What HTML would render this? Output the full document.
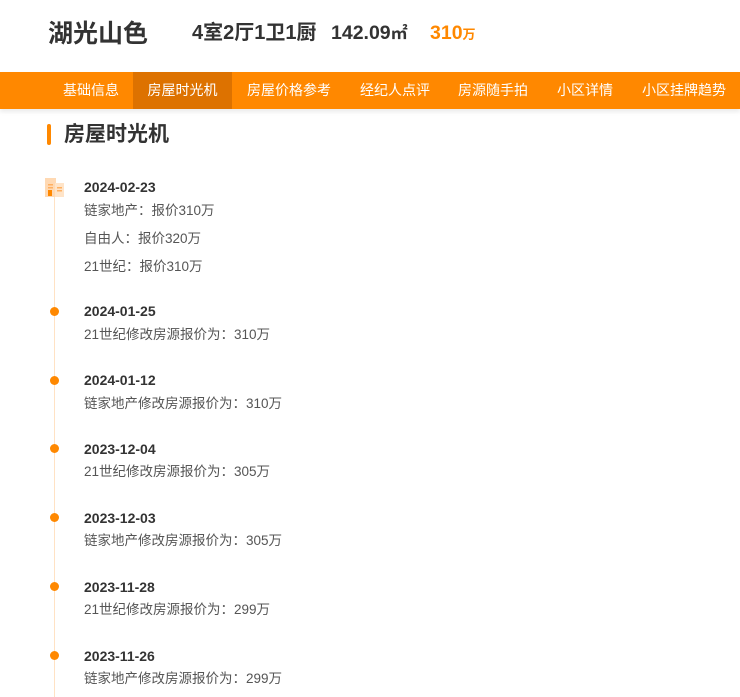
<!DOCTYPE html>
<html><head><meta charset="utf-8"><style>
*{margin:0;padding:0;box-sizing:border-box}
body{width:740px;height:697px;overflow:hidden;background:#fff;font-family:"Liberation Sans","Noto Sans CJK SC",sans-serif;color:#333;position:relative}
.a{position:absolute;white-space:nowrap}
.nav{position:absolute;left:0;top:72px;width:740px;height:37px;background:#ff8800;box-shadow:0 3px 4px rgba(0,0,0,.08)}
.nav span{position:absolute;top:0;height:37px;line-height:37px;font-size:14px;color:#fff}
.date{font-weight:bold;font-size:14px;color:#333}
.t{font-size:13.5px;color:#555}
.dot{position:absolute;left:50px;width:9px;height:9px;border-radius:50%;background:#ff8800}
</style></head><body>
<div class="a" style="left:48px;top:16px;font-size:25px;font-weight:bold;color:#333;line-height:36px">湖光山色</div>
<div class="a" style="left:192px;top:19px;font-size:20px;font-weight:bold;color:#333;line-height:28px">4室2厅1卫1厨</div>
<div class="a" style="left:331px;top:19px;font-size:19.5px;font-weight:bold;color:#333;line-height:28px">142.09<span style="font-size:17px">㎡</span></div>
<div class="a" style="left:430px;top:19px;font-size:19.5px;font-weight:bold;color:#ff8800;line-height:28px">310<span style="font-size:13px">万</span></div>
<div class="nav">
<span style="left:63px">基础信息</span>
<span style="left:133px;width:99px;background:#dd7200;text-align:center">房屋时光机</span>
<span style="left:247px">房屋价格参考</span>
<span style="left:360px">经纪人点评</span>
<span style="left:458px">房源随手拍</span>
<span style="left:557px">小区详情</span>
<span style="left:642px">小区挂牌趋势</span>
</div>
<div class="a" style="left:47px;top:124px;width:4px;height:21px;background:#ff8800;border-radius:2px"></div>
<div class="a" style="left:64px;top:120px;font-size:21px;font-weight:bold;color:#333;line-height:30px">房屋时光机</div>
<div class="a" style="left:54px;top:186px;width:1px;height:511px;background:#ffe2c4"></div>
<svg class="a" style="left:45px;top:178px" width="20" height="20"><rect x="0" y="0" width="11" height="19" fill="#ffd9b3"/><rect x="10" y="5" width="9" height="14" fill="#ffe4c8"/><rect x="3" y="12" width="4" height="6" fill="#ff8800"/><rect x="3" y="6" width="5" height="1.5" fill="#ffb060"/><rect x="3" y="9" width="5" height="1.5" fill="#ffb060"/><rect x="12" y="9" width="5" height="1.5" fill="#ffb060"/><rect x="12" y="12" width="5" height="1.5" fill="#ffb060"/></svg>
<div class="a date" style="left:84px;top:179px">2024-02-23</div>
<div class="a t" style="left:84px;top:199px">链家地产：报价310万</div>
<div class="a t" style="left:84px;top:227px">自由人：报价320万</div>
<div class="a t" style="left:84px;top:255px">21世纪：报价310万</div>

<div class="dot" style="top:307px"></div>
<div class="a date" style="left:84px;top:303px">2024-01-25</div>
<div class="a t" style="left:84px;top:323px">21世纪修改房源报价为：310万</div>

<div class="dot" style="top:376px"></div>
<div class="a date" style="left:84px;top:372px">2024-01-12</div>
<div class="a t" style="left:84px;top:392px">链家地产修改房源报价为：310万</div>

<div class="dot" style="top:444px"></div>
<div class="a date" style="left:84px;top:441px">2023-12-04</div>
<div class="a t" style="left:84px;top:460px">21世纪修改房源报价为：305万</div>

<div class="dot" style="top:513px"></div>
<div class="a date" style="left:84px;top:510px">2023-12-03</div>
<div class="a t" style="left:84px;top:529px">链家地产修改房源报价为：305万</div>

<div class="dot" style="top:582px"></div>
<div class="a date" style="left:84px;top:579px">2023-11-28</div>
<div class="a t" style="left:84px;top:598px">21世纪修改房源报价为：299万</div>

<div class="dot" style="top:651px"></div>
<div class="a date" style="left:84px;top:648px">2023-11-26</div>
<div class="a t" style="left:84px;top:667px">链家地产修改房源报价为：299万</div>
</body></html>
